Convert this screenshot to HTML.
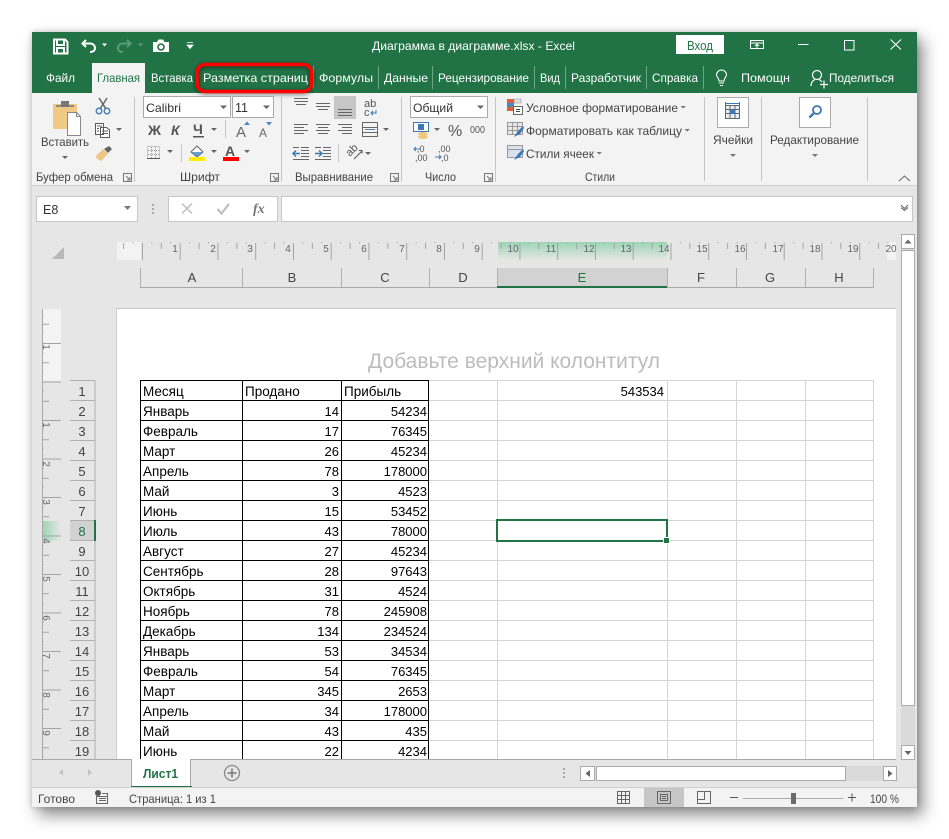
<!DOCTYPE html>
<html><head><meta charset="utf-8">
<style>
html,body{margin:0;padding:0;background:#fff;width:949px;height:839px;overflow:hidden}
#w{position:absolute;left:32px;top:32px;width:885px;height:775px;box-shadow:6px 8px 15px rgba(0,0,0,.45),0 0 6px rgba(0,0,0,.2)}
svg{position:absolute;left:0;top:0}
text{font-family:"Liberation Sans",sans-serif;font-size:12px;fill:#444}
.t text{fill:#fff}
.c text{font-size:13px;fill:#000}
.c text:not(.e){font-size:13.5px}
.e{text-anchor:end}
.m{text-anchor:middle}
.r text{font-size:10px;fill:#666;text-anchor:middle}
.h text{font-size:13px;fill:#444;text-anchor:middle}
</style></head><body>
<div id="w"></div>
<svg width="949" height="839" viewBox="0 0 949 839">
<defs>
<pattern id="rh" width="37.75" height="18" patternUnits="userSpaceOnUse" patternTransform="translate(179.7,242)">
<path d="M.5 1V18M19.4 1V7M9.9 0V1.200M28.8 0V1.200" stroke="#a4a4a4" fill="none"/>
</pattern>
<pattern id="rv" width="19" height="38.5" patternUnits="userSpaceOnUse" patternTransform="translate(42,343)">
<path d="M0 .5H19M0 19.7H7M0 10H1.500M0 29H1.500" stroke="#a4a4a4" fill="none"/>
</pattern>
<linearGradient id="gh" x1="0" y1="0" x2="0" y2="1"><stop offset="0" stop-color="#9bd5b4"/><stop offset="1" stop-color="#e6e6e6"/></linearGradient>
<linearGradient id="gv" x1="0" y1="0" x2="1" y2="0"><stop offset="0" stop-color="#9bd5b4"/><stop offset="1" stop-color="#e6e6e6"/></linearGradient>
<filter id="sd" x="-20%" y="-40%" width="140%" height="180%"><feDropShadow dx="0" dy="1" stdDeviation="2" flood-color="#000" flood-opacity=".6"/></filter>
</defs>

<!-- base -->
<rect x="32" y="32" width="885" height="775" fill="#e6e6e6"/>
<rect x="32" y="32" width="885" height="61" fill="#217346"/>
<rect x="32" y="93" width="885" height="92" fill="#f3f3f3"/>
<rect x="32" y="185" width="885" height="1" fill="#d0d0d0"/>

<!-- title bar icons -->
<path d="M54 39.5H65L67.5 42V53.5H54ZM57 40V45H64V40M57 53V48H64V53" fill="none" stroke="#fff" stroke-width="2"/>
<path d="M86 40L82.5 43.5L86 47M83 43.5H90C93 43.5 95 45.5 95 48C95 50.500 93 52 90 52" fill="none" stroke="#fff" stroke-width="2"/>
<path d="M102 43.500H107L104.500 46.500Z" fill="#fff"/>
<path d="M127 40L130.500 43.500L127 47M130 43.500H123C120 43.500 118 45.500 118 48C118 50.500 120 52 123 52" fill="none" stroke="#5b9b78" stroke-width="2"/>
<path d="M138 43.500H143L140.500 46.500Z" fill="#5b9b78"/>
<path d="M153 42H157L158.500 39.500H163L164.500 42H169V52H153Z" fill="#fff"/>
<circle cx="161" cy="47" r="3" fill="none" stroke="#217346" stroke-width="1.600"/>
<path d="M187 42.500H193M187 45H193L190 48.500Z" fill="#fff" stroke="#fff" stroke-width=".8"/>
<g class="t">
<text x="372" y="50" textLength="203" lengthAdjust="spacingAndGlyphs">Диаграмма в диаграмме.xlsx - Excel</text>
<text x="46" y="82" textLength="29" lengthAdjust="spacingAndGlyphs">Файл</text>
<text x="151" y="82" textLength="42" lengthAdjust="spacingAndGlyphs">Вставка</text>
<text x="203" y="82" textLength="105" lengthAdjust="spacingAndGlyphs">Разметка страниц</text>
<text x="319" y="82" textLength="54" lengthAdjust="spacingAndGlyphs">Формулы</text>
<text x="384" y="82" textLength="44" lengthAdjust="spacingAndGlyphs">Данные</text>
<text x="438" y="82" textLength="91" lengthAdjust="spacingAndGlyphs">Рецензирование</text>
<text x="540" y="82" textLength="20" lengthAdjust="spacingAndGlyphs">Вид</text>
<text x="571" y="82" textLength="70" lengthAdjust="spacingAndGlyphs">Разработчик</text>
<text x="652" y="82" textLength="46" lengthAdjust="spacingAndGlyphs">Справка</text>
<text x="741" y="82" textLength="49" lengthAdjust="spacingAndGlyphs">Помощн</text>
<text x="829" y="82" textLength="65" lengthAdjust="spacingAndGlyphs">Поделиться</text>
</g>
<path d="M313.500 66V89M378.500 66V89M432.500 66V89M534.500 66V89M565.500 66V89M646.500 66V89M703.500 66V89" stroke="#6ea587" stroke-width="1"/>
<rect x="92" y="63" width="53" height="31" fill="#f3f3f3"/>
<text x="97" y="82" textLength="43" lengthAdjust="spacingAndGlyphs" style="fill:#217346">Главная</text>
<rect x="197" y="64.500" width="114.500" height="27" rx="8" fill="none" stroke="#f00" stroke-width="3.500" filter="url(#sd)"/>
<!-- bulb / share -->
<path d="M719 81C719 78 716.500 77 716.500 75A5 5 0 0 1 726.500 75C726.500 77 724 78 724 81ZM719 83H724M720 85.500H723" fill="none" stroke="#fff" stroke-width="1.100"/>
<circle cx="817" cy="75" r="4.500" fill="none" stroke="#fff" stroke-width="1.200"/>
<path d="M811 86C811 82 813 80.500 815 79.500M819 79.500C820 80 821 80.500 822 82M820 84.500H828M824 80.500V88.500" fill="none" stroke="#fff" stroke-width="1.200"/>
<!-- window buttons -->
<rect x="676" y="35" width="48" height="19" fill="#fff"/>
<text x="687" y="50" textLength="26" lengthAdjust="spacingAndGlyphs" style="fill:#217346;font-size:13px">Вход</text>
<path d="M750.500 40.500H763.500V48.500H750.500ZM751 43H763M757 48V44M755 46L757 44L759 46" fill="none" stroke="#fff"/>
<path d="M798 44.500H808.500" stroke="#fff"/>
<rect x="844.500" y="40.500" width="9.500" height="9.500" fill="none" stroke="#fff"/>
<path d="M890.500 39.500L901 49.500M901 39.500L890.500 49.500" stroke="#fff" stroke-width="1.100"/>

<!-- group separators -->
<path d="M134.500 97V182M281.500 97V182M401.500 97V182M495.500 97V182M704.500 97V181M761.500 97V181M867.500 97V181" stroke="#c6c6c6"/>
<!-- launchers -->
<g fill="none" stroke="#777">
<path d="M123.500 173.500H131.500V181.500H123.500ZM126 176L130 180M130 177V180H127"/>
<path d="M270.500 173.500H278.500V181.500H270.500ZM273 176L277 180M277 177V180H274"/>
<path d="M390.500 173.500H398.500V181.500H390.500ZM393 176L397 180M397 177V180H394"/>
<path d="M484.500 173.500H492.500V181.500H484.500ZM487 176L491 180M491 177V180H488"/>
<path d="M899 181L904.500 176L910 181" stroke="#666"/>
</g>

<!-- clipboard group -->
<rect x="53" y="104" width="24" height="25" rx="1" fill="#f0ca84"/>
<rect x="56" y="105" width="18" height="2" fill="#8a8a8a"/>
<rect x="61" y="101" width="8" height="6" fill="#777"/>
<path d="M67.500 112.500H76.500L80.500 116.500V135.500H67.500Z" fill="#fff" stroke="#888"/>
<path d="M76.500 112.500V116.500H80.500" fill="none" stroke="#888"/>
<text x="41" y="146" textLength="48" lengthAdjust="spacingAndGlyphs">Вставить</text>
<path d="M62 156H68L65 159Z" fill="#666"/>
<path d="M99 98L106 109M107 98L100 109" stroke="#666" stroke-width="1.500" fill="none"/>
<circle cx="99" cy="111" r="2.800" fill="none" stroke="#3b78b5" stroke-width="1.300"/>
<circle cx="107" cy="111" r="2.800" fill="none" stroke="#3b78b5" stroke-width="1.300"/>
<path d="M95.500 123.500H103.500V134.500H95.500ZM100.500 127.500H106.500L109.500 130V137.500H100.500ZM97 126H102M97 128.500H99M97 131H99M102 131H108M102 133.500H108" fill="#fff" stroke="#5c5c5c"/>
<path d="M116 128H122L119 131Z" fill="#666"/>
<path d="M96 156L103 149L108 154L101 161L96 158Z" fill="#eec787"/>
<path d="M104 149L109 146L112 149L108 153Z" fill="#666"/>
<text x="36" y="181" textLength="77" lengthAdjust="spacingAndGlyphs">Буфер обмена</text>

<!-- font group -->
<rect x="143.500" y="96.500" width="87" height="21" fill="#fff" stroke="#ababab"/>
<rect x="232.500" y="96.500" width="41" height="21" fill="#fff" stroke="#ababab"/>
<text x="146" y="112" textLength="35" lengthAdjust="spacingAndGlyphs" style="fill:#333">Calibri</text>
<text x="235" y="112" style="fill:#333;font-size:12.500px">11</text>
<path d="M220 105.500H227L223.500 109ZM263 105.500H270L266.500 109Z" fill="#666"/>
<text x="148" y="135" style="font-size:14px;font-weight:bold;fill:#555" textLength="13" lengthAdjust="spacingAndGlyphs">Ж</text>
<text x="171" y="135" style="font-size:14px;font-weight:bold;font-style:italic;fill:#555">К</text>
<text x="193" y="134" style="font-size:14px;font-weight:bold;fill:#555">Ч</text>
<rect x="193" y="136" width="11" height="1.500" fill="#555"/>
<path d="M211 128H217L214 131Z" fill="#666"/>
<path d="M225.500 120V138" stroke="#c6c6c6"/>
<text x="236" y="137" style="font-size:15px;fill:#666">A</text>
<path d="M244 125H250L247 121.500Z" fill="#4a86c0"/>
<text x="259" y="137" style="font-size:12px;fill:#666">A</text>
<path d="M266 122H272L269 125.500Z" fill="#4a86c0"/>
<path d="M147.500 146.500H159.500V158.500H147.500ZM151.500 147V158M155.500 147V158M148 150.500H159M148 154.500H159" fill="none" stroke="#999" stroke-dasharray="1 1"/>
<path d="M147 158.500H160" stroke="#555"/>
<path d="M167 150H173L170 153Z" fill="#666"/>
<path d="M181.500 144V162" stroke="#c6c6c6"/>
<path d="M191 152L197 146L203 152L197 157Z" fill="#fff" stroke="#666"/>
<path d="M197 152L203 152L197 157L191 152Z" fill="#4a86c0" opacity=".8"/>
<rect x="189" y="157" width="16" height="4" fill="#ffee00"/>
<path d="M211 150H217L214 153Z" fill="#666"/>
<text x="225" y="156" style="font-size:14px;font-weight:bold;fill:#555">A</text>
<rect x="223" y="157" width="16" height="4" fill="#f00"/>
<path d="M244 150H250L247 153Z" fill="#666"/>
<text x="180" y="181" textLength="40" lengthAdjust="spacingAndGlyphs">Шрифт</text>

<!-- alignment group -->
<rect x="334" y="96" width="22" height="23" fill="#c6c6c6"/>
<g fill="none" stroke="#666">
<path d="M294 98.500H308M294 101.500H308M296 104.500H306"/>
<path d="M316 103.500H330M316 106.500H330M318 109.500H328"/>
<path d="M338 109.500H352M338 112.500H352M338 115.500H352"/>
<path d="M294 124.500H308M294 127.500H304M294 130.500H308M294 133.500H304"/>
<path d="M316 124.500H330M318 127.500H328M316 130.500H330M318 133.500H328"/>
<path d="M338 124.500H352M342 127.500H352M338 130.500H352M342 133.500H352"/>
<path d="M362.500 122.500H377.500V136.500H362.500ZM363 127.500H377M363 132.500H377"/>
<path d="M301 147.500H309M301 150.500H309M301 153.500H309M301 156.500H309M293 159.500H309M293 147.500H299"/>
<path d="M323 147.500H331M323 150.500H331M323 153.500H331M323 156.500H331M315 159.500H331M315 147.500H321"/>
</g>
<path d="M365 129.500H375" stroke="#4a86c0"/>
<path d="M293 153.500H300M296 150.500L293 153.500L296 156.500" fill="none" stroke="#3b78b5" stroke-width="1.500"/>
<path d="M315 153.500H322M319 150.500L322 153.500L319 156.500" fill="none" stroke="#3b78b5" stroke-width="1.500"/>
<text x="364" y="107" style="font-size:11px;fill:#555">ab</text>
<text x="364" y="116" style="font-size:11px;fill:#555">c</text>
<path d="M376 110V113H371M373 111L371 113L373 115" fill="none" stroke="#3b78b5"/>
<path d="M383 128H389L386 131Z" fill="#666"/>
<path d="M338.500 144V162" stroke="#c6c6c6"/>
<text x="347" y="154" style="font-size:11px;fill:#555" transform="rotate(-45 352 152)">ab</text>
<path d="M354 159L362 151M359 150.500H362V153.500" fill="none" stroke="#555"/>
<path d="M365 152H371L368 155Z" fill="#666"/>
<text x="295" y="181" textLength="78" lengthAdjust="spacingAndGlyphs">Выравнивание</text>

<!-- number group -->
<rect x="410.500" y="96.500" width="77" height="21" fill="#fff" stroke="#ababab"/>
<text x="413" y="112" textLength="40" lengthAdjust="spacingAndGlyphs" style="fill:#333">Общий</text>
<path d="M477 105.500H484L480.500 109Z" fill="#666"/>
<rect x="413.500" y="122.500" width="15" height="9" fill="#fff" stroke="#3b78b5"/>
<rect x="418" y="124" width="6" height="6" fill="#3b78b5"/>
<ellipse cx="423" cy="134" rx="5" ry="2" fill="#efc77f"/><ellipse cx="423" cy="137" rx="5" ry="2" fill="#efc77f"/>
<path d="M434 128H440L437 131Z" fill="#666"/>
<text x="448" y="136" style="font-size:16px;fill:#555">%</text>
<text x="470" y="133" style="font-size:10px;fill:#555" textLength="15" lengthAdjust="spacingAndGlyphs">000</text>
<text x="417" y="152" style="font-size:9px;fill:#555">,0</text>
<text x="415" y="161" style="font-size:9px;fill:#555">,00</text>
<path d="M420 149H414M416 147L414 149L416 151" fill="none" stroke="#3b78b5"/>
<text x="438" y="152" style="font-size:9px;fill:#555">,00</text>
<text x="441" y="161" style="font-size:9px;fill:#555">,0</text>
<path d="M435 157H441M439 155L441 157L439 159" fill="none" stroke="#3b78b5"/>
<text x="425" y="181" textLength="31" lengthAdjust="spacingAndGlyphs">Число</text>

<!-- styles group -->
<rect x="507" y="99" width="7" height="4" fill="#d9603b"/><rect x="514" y="99" width="7" height="4" fill="#ddd" stroke="#888" stroke-width=".5"/>
<rect x="507" y="103" width="7" height="4" fill="#4a86c0"/><rect x="507" y="107" width="7" height="4" fill="#d9603b"/>
<rect x="513.500" y="106.500" width="9" height="8" fill="#fff" stroke="#666"/>
<path d="M516 109.500H520M516 111.500H520" stroke="#444"/>
<path d="M507.500 122.500H522.500V134.500H507.500ZM512.500 123V134M517.500 123V134M508 126.500H522M508 130.500H522" fill="#e9e9e9" stroke="#999"/>
<path d="M514 137L518 131L523 126L524 128L520 134Z" fill="#3b78b5"/>
<path d="M507.500 145.500H522.500V157.500H507.500ZM508 149.500H522" fill="#d8e2ee" stroke="#999"/>
<path d="M514 160L518 154L523 149L524 151L520 157Z" fill="#3b78b5"/>
<text x="526" y="112" textLength="152" lengthAdjust="spacingAndGlyphs">Условное форматирование</text>
<text x="526" y="135" textLength="156" lengthAdjust="spacingAndGlyphs">Форматировать как таблицу</text>
<text x="526" y="158" textLength="68" lengthAdjust="spacingAndGlyphs">Стили ячеек</text>
<path d="M680.500 106H686L683.250 108.500ZM684.500 129H690L687.250 131.500ZM596.500 152H602L599.250 154.500Z" fill="#777"/>
<text x="585" y="181" textLength="30" lengthAdjust="spacingAndGlyphs">Стили</text>

<!-- cells / edit -->
<rect x="717.500" y="97.500" width="31" height="30" fill="#fff" stroke="#ababab"/>
<path d="M725.500 105.500H739.500V118.500H725.500ZM730 106V118M735 106V118M726 109.500H739M726 113.500H739" fill="#e6edf5" stroke="#666"/>
<rect x="730" y="110" width="5" height="4" fill="#3b78b5"/>
<path d="M725.500 103.500H739.500M725.500 102V105M739.500 102V105" stroke="#3b78b5" fill="none"/>
<text x="713" y="144" textLength="40" lengthAdjust="spacingAndGlyphs">Ячейки</text>
<path d="M730 154H736L733 157Z" fill="#777"/>
<rect x="799.500" y="97.500" width="31" height="30" fill="#fff" stroke="#ababab"/>
<circle cx="817" cy="110" r="4" fill="#fff" stroke="#3b78b5" stroke-width="1.800"/>
<path d="M813.500 113.500L809.500 117.500" stroke="#3b78b5" stroke-width="2.500"/>
<text x="770" y="144" textLength="89" lengthAdjust="spacingAndGlyphs">Редактирование</text>
<path d="M812 154H818L815 157Z" fill="#777"/>

<!-- formula row -->
<rect x="36.500" y="196.500" width="101" height="25" fill="#fff" stroke="#c6c6c6"/>
<text x="43" y="214" style="font-size:12.500px;fill:#333">E8</text>
<path d="M124 206H131L127.500 210Z" fill="#777"/>
<path d="M153 204V206M153 208V210M153 212V214" stroke="#aaa" stroke-width="2"/>
<rect x="168.500" y="196.500" width="109" height="25" fill="#fff" stroke="#c6c6c6"/>
<path d="M182 203.500L192 213.500M192 203.500L182 213.500" stroke="#bdbdbd" stroke-width="1.500"/>
<path d="M217.500 209L221.500 213.500L229 204" fill="none" stroke="#bdbdbd" stroke-width="2.200"/>
<text x="253" y="213" style="font-family:'Liberation Serif',serif;font-size:14px;font-style:italic;font-weight:bold;fill:#777">fx</text>
<rect x="281.500" y="196.500" width="631" height="25" fill="#fff" stroke="#c6c6c6"/>
<path d="M901 205L904.500 208.500L908 205M901 207.500L904.500 210.500L908 207.500" fill="none" stroke="#777" stroke-width="1.200"/>

<!-- corner + rulers -->
<path d="M64 247V259H52Z" fill="#b8b8b8"/>
<rect x="117" y="242" width="24" height="18" fill="#f3f3f3"/>
<rect x="887" y="242" width="9" height="18" fill="#f3f3f3"/>
<rect x="498" y="242" width="169" height="18" fill="url(#gh)"/>
<rect x="117" y="242" width="779" height="18" fill="url(#rh)"/>
<g class="r">
<text x="175" y="252">1</text><text x="213" y="252">2</text><text x="250" y="252">3</text><text x="288" y="252">4</text><text x="326" y="252">5</text><text x="364" y="252">6</text><text x="402" y="252">7</text><text x="439" y="252">8</text><text x="477" y="252">9</text>
<text x="513" y="252">10</text><text x="551" y="252">11</text><text x="589" y="252">12</text><text x="626" y="252">13</text><text x="664" y="252">14</text><text x="702" y="252">15</text><text x="740" y="252">16</text><text x="778" y="252">17</text><text x="815" y="252">18</text><text x="853" y="252">19</text><text x="891" y="252">20</text>
</g>
<rect x="42" y="309" width="19" height="72" fill="#f3f3f3"/>
<rect x="42" y="521" width="19" height="20" fill="url(#gv)"/>
<rect x="42" y="309" width="19" height="450" fill="url(#rv)"/>
<rect x="42" y="309" width="1" height="450" fill="#a8a8a8"/>
<g class="r">
<text transform="translate(43,347) rotate(90)">1</text>
<text transform="translate(43,425) rotate(90)">1</text>
<text transform="translate(43,464) rotate(90)">2</text>
<text transform="translate(43,502) rotate(90)">3</text>
<text transform="translate(43,541) rotate(90)">4</text>
<text transform="translate(43,579) rotate(90)">5</text>
<text transform="translate(43,618) rotate(90)">6</text>
<text transform="translate(43,656) rotate(90)">7</text>
<text transform="translate(43,695) rotate(90)">8</text>
<text transform="translate(43,733) rotate(90)">9</text>
</g>

<!-- column header -->
<rect x="498" y="268" width="169" height="18" fill="#d2d2d2"/>
<path d="M140.500 268V287M242.500 268V287M341.500 268V287M429.500 268V287M497.500 268V287M667.500 268V287M736.500 268V287M805.500 268V287M873.500 268V287" stroke="#b0b0b0"/>
<rect x="140" y="287" width="734" height="1" fill="#a8a8a8"/>
<rect x="497" y="286" width="170" height="2" fill="#217346"/>
<g class="h">
<text x="192" y="282">A</text><text x="292" y="282">B</text><text x="385" y="282">C</text><text x="463" y="282">D</text><text x="582" y="282" style="fill:#217346">E</text><text x="701" y="282">F</text><text x="770" y="282">G</text><text x="839" y="282">H</text>
</g>

<!-- page -->
<rect x="117" y="308" width="779" height="451" fill="#fff"/>
<path d="M117 308.500H896" stroke="#c4c4c4"/>
<path d="M116.500 308V759" stroke="#d0d0d0"/>
<text x="368" y="368" textLength="292" lengthAdjust="spacingAndGlyphs" style="font-size:21px;fill:#bcbcbc">Добавьте верхний колонтитул</text>

<!-- row headers -->
<rect x="70" y="520" width="25" height="20" fill="#d2d2d2"/>
<path d="M70 380.500H95M70 400.500H95M70 420.500H95M70 440.500H95M70 460.500H95M70 480.500H95M70 500.500H95M70 520.500H95M70 540.500H95M70 560.500H95M70 580.500H95M70 600.500H95M70 620.500H95M70 640.500H95M70 660.500H95M70 680.500H95M70 700.500H95M70 720.500H95M70 740.500H95M95 380V759" stroke="#b0b0b0"/>
<rect x="94" y="520" width="2" height="21" fill="#217346"/>
<g class="h">
<text x="82" y="396">1</text><text x="82" y="416">2</text><text x="82" y="436">3</text><text x="82" y="456">4</text><text x="82" y="476">5</text><text x="82" y="496">6</text><text x="82" y="516">7</text><text x="82" y="536" style="fill:#217346">8</text><text x="82" y="556">9</text><text x="82" y="576">10</text><text x="82" y="596">11</text><text x="82" y="616">12</text><text x="82" y="636">13</text><text x="82" y="656">14</text><text x="82" y="676">15</text><text x="82" y="696">16</text><text x="82" y="716">17</text><text x="82" y="736">18</text><text x="82" y="756">19</text>
</g>

<!-- grid -->
<path d="M429 380.500H874M429 400.500H874M429 420.500H874M429 440.500H874M429 460.500H874M429 480.500H874M429 500.500H874M429 520.500H874M429 540.500H874M429 560.500H874M429 580.500H874M429 600.500H874M429 620.500H874M429 640.500H874M429 660.500H874M429 680.500H874M429 700.500H874M429 720.500H874M429 740.500H874M497.500 380V759M667.500 380V759M736.500 380V759M805.500 380V759M873.500 380V759" stroke="#d4d4d4"/>
<path d="M140 380.500H429M140 400.500H429M140 420.500H429M140 440.500H429M140 460.500H429M140 480.500H429M140 500.500H429M140 520.500H429M140 540.500H429M140 560.500H429M140 580.500H429M140 600.500H429M140 620.500H429M140 640.500H429M140 660.500H429M140 680.500H429M140 700.500H429M140 720.500H429M140 740.500H429M140.500 380V759M242.500 380V759M341.500 380V759M428.500 380V759" stroke="#000"/>
<g class="c">
<text x="143" y="396">Месяц</text><text x="245" y="396">Продано</text><text x="344" y="396">Прибыль</text><text x="664" y="396" class="e">543534</text>
<text x="143" y="416">Январь</text><text x="339" y="416" class="e">14</text><text x="427" y="416" class="e">54234</text>
<text x="143" y="436">Февраль</text><text x="339" y="436" class="e">17</text><text x="427" y="436" class="e">76345</text>
<text x="143" y="456">Март</text><text x="339" y="456" class="e">26</text><text x="427" y="456" class="e">45234</text>
<text x="143" y="476">Апрель</text><text x="339" y="476" class="e">78</text><text x="427" y="476" class="e">178000</text>
<text x="143" y="496">Май</text><text x="339" y="496" class="e">3</text><text x="427" y="496" class="e">4523</text>
<text x="143" y="516">Июнь</text><text x="339" y="516" class="e">15</text><text x="427" y="516" class="e">53452</text>
<text x="143" y="536">Июль</text><text x="339" y="536" class="e">43</text><text x="427" y="536" class="e">78000</text>
<text x="143" y="556">Август</text><text x="339" y="556" class="e">27</text><text x="427" y="556" class="e">45234</text>
<text x="143" y="576">Сентябрь</text><text x="339" y="576" class="e">28</text><text x="427" y="576" class="e">97643</text>
<text x="143" y="596">Октябрь</text><text x="339" y="596" class="e">31</text><text x="427" y="596" class="e">4524</text>
<text x="143" y="616">Ноябрь</text><text x="339" y="616" class="e">78</text><text x="427" y="616" class="e">245908</text>
<text x="143" y="636">Декабрь</text><text x="339" y="636" class="e">134</text><text x="427" y="636" class="e">234524</text>
<text x="143" y="656">Январь</text><text x="339" y="656" class="e">53</text><text x="427" y="656" class="e">34534</text>
<text x="143" y="676">Февраль</text><text x="339" y="676" class="e">54</text><text x="427" y="676" class="e">76345</text>
<text x="143" y="696">Март</text><text x="339" y="696" class="e">345</text><text x="427" y="696" class="e">2653</text>
<text x="143" y="716">Апрель</text><text x="339" y="716" class="e">34</text><text x="427" y="716" class="e">178000</text>
<text x="143" y="736">Май</text><text x="339" y="736" class="e">43</text><text x="427" y="736" class="e">435</text>
<text x="143" y="756">Июнь</text><text x="339" y="756" class="e">22</text><text x="427" y="756" class="e">4234</text>
</g>
<rect x="497" y="520" width="170" height="21" fill="none" stroke="#217346" stroke-width="2"/>
<rect x="663.500" y="537.500" width="6" height="6" fill="#217346" stroke="#fff"/>

<!-- vertical scrollbar -->
<rect x="901" y="234" width="14" height="525" fill="#dadada"/>
<rect x="901.500" y="250.500" width="13" height="455" fill="#fff" stroke="#ababab"/>
<rect x="901.500" y="234.500" width="13" height="14" fill="#fff" stroke="#ababab"/>
<rect x="901.500" y="745.500" width="13" height="14" fill="#fff" stroke="#ababab"/>
<path d="M904.500 243.500H911.500L908 239.500ZM904.500 751H911.500L908 755Z" fill="#666"/>

<!-- sheet tab bar -->
<rect x="32" y="759" width="864" height="1" fill="#a8a8a8"/>
<rect x="131" y="759" width="60" height="27" fill="#fff"/>
<path d="M131.500 759V786M190.500 759V786" stroke="#a8a8a8"/>
<rect x="131" y="786" width="61" height="2" fill="#217346"/>
<text x="143" y="778" textLength="35" lengthAdjust="spacingAndGlyphs" style="font-size:13px;font-weight:bold;fill:#217346">Лист1</text>
<path d="M63 769V776L59 772.500ZM88 769V776L92 772.500Z" fill="#c4c4c4"/>
<circle cx="232" cy="773" r="7.500" fill="none" stroke="#8a8a8a" stroke-width="1.300"/>
<path d="M232 768.500V777.500M227.500 773H236.500" stroke="#777" stroke-width="1.500"/>
<path d="M564 768V770M564 772V774M564 776V778" stroke="#aaa" stroke-width="2"/>
<rect x="580" y="766" width="317" height="15" fill="#dadada"/>
<rect x="596.500" y="766.500" width="249" height="14" fill="#fff" stroke="#ababab"/>
<rect x="580.500" y="766.500" width="14" height="14" fill="#fff" stroke="#ababab"/>
<rect x="883.500" y="766.500" width="13" height="14" fill="#fff" stroke="#ababab"/>
<path d="M590 770V777L585.500 773.500ZM888 770V777L892.500 773.500Z" fill="#666"/>

<!-- status bar -->
<rect x="32" y="787" width="885" height="1" fill="#d0d0d0"/>
<rect x="32" y="788" width="885" height="19" fill="#f3f3f3"/>
<text x="38" y="803" textLength="37" lengthAdjust="spacingAndGlyphs">Готово</text>
<circle cx="98" cy="793" r="3" fill="#555"/>
<path d="M96 796.500H108M96.500 796V803.500H107.500V793.500H102M99 798.500H106M99 800.500H106" fill="none" stroke="#666"/>
<text x="129" y="803" textLength="87" lengthAdjust="spacingAndGlyphs">Страница: 1 из 1</text>
<rect x="644" y="788" width="40" height="19" fill="#c6c6c6"/>
<path d="M617.500 791.500H629.500V803.500H617.500ZM621.500 792V803M625.500 792V803M618 795.500H629M618 799.500H629" fill="none" stroke="#666"/>
<path d="M657.500 791.500H670.500V803.500H657.500ZM660.500 794.500H667.500V800.500H660.500ZM662 796.500H666M662 798.500H666" fill="none" stroke="#666"/>
<path d="M697.500 791.500H710.500V803.500H697.500ZM697.500 799.500H704.500V791.500" fill="none" stroke="#666"/>
<path d="M730 797.500H738M848 797.500H856M852 793.500V801.500" stroke="#555" fill="none"/>
<path d="M743 798.500H843" stroke="#aaa"/>
<rect x="791" y="793" width="5" height="11" fill="#6a6a6a"/>
<text x="870" y="803" textLength="29" lengthAdjust="spacingAndGlyphs">100 %</text>
</svg>
</body></html>
